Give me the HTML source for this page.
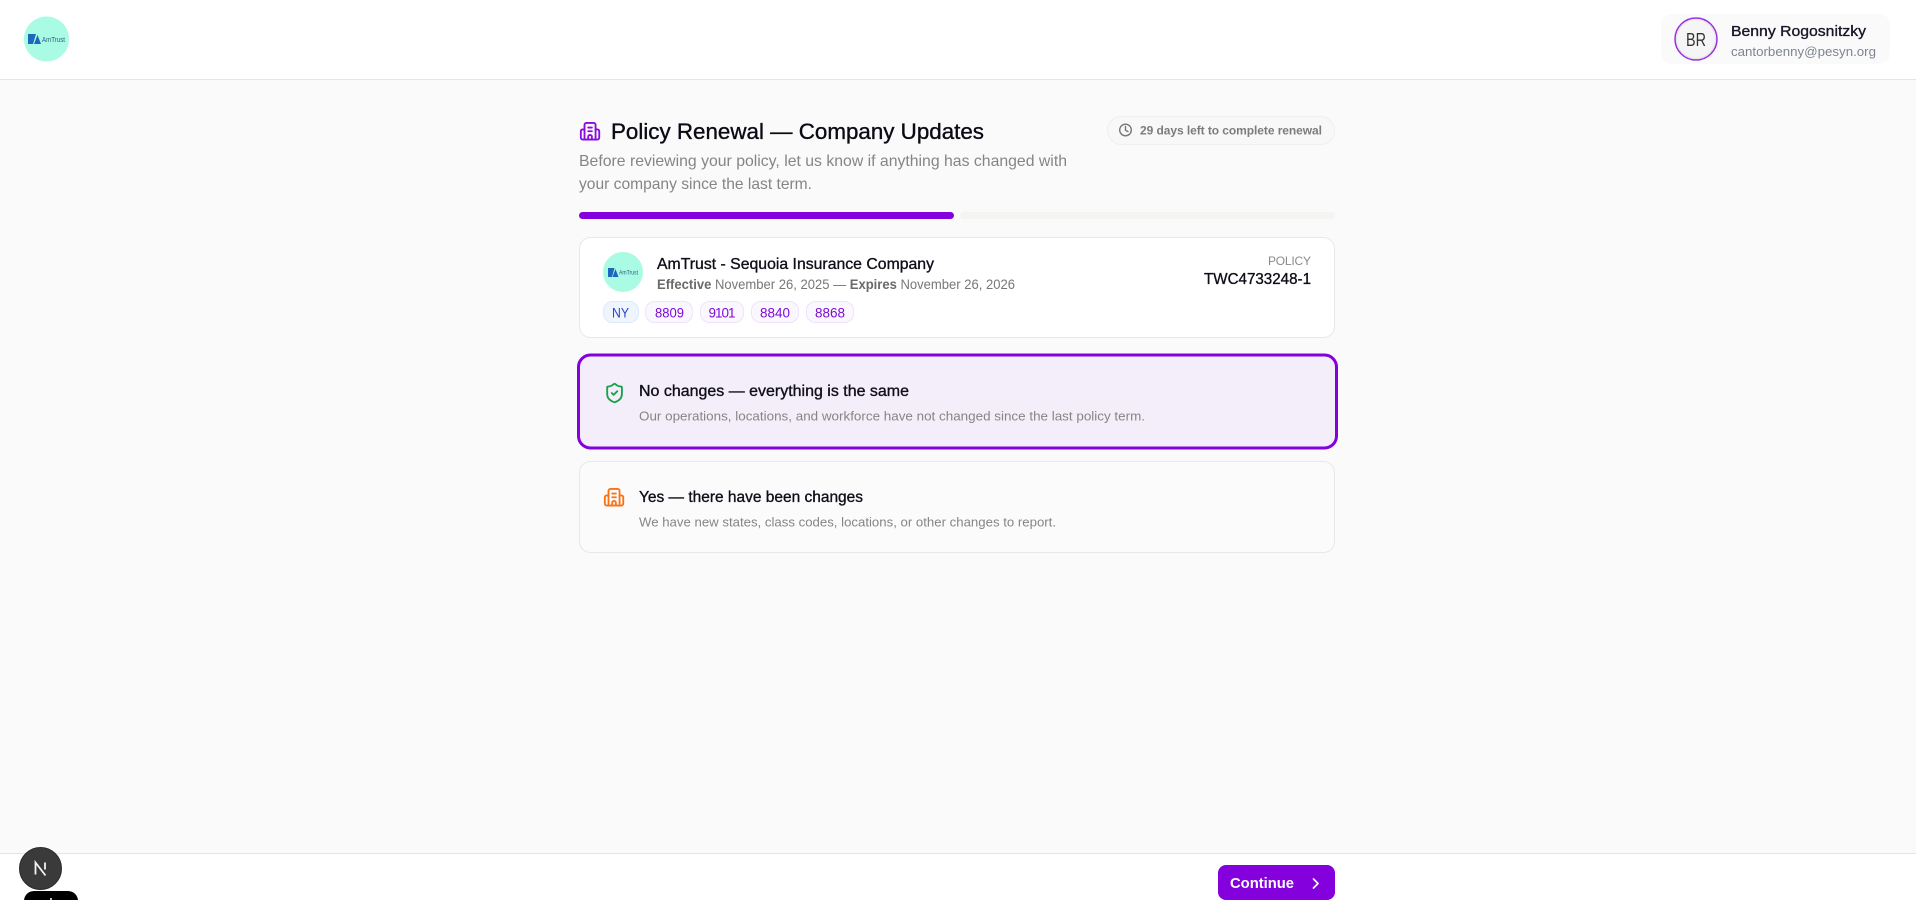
<!DOCTYPE html>
<html lang="en"><head><meta charset="utf-8"><title>Policy Renewal</title>
<style>
html,body{margin:0;padding:0;width:1916px;height:900px;overflow:hidden;background:#fafafa}
svg{display:block;position:absolute;left:0;top:0}
text{font-family:"Liberation Sans",sans-serif;white-space:pre}
.m{stroke:currentColor;stroke-width:.35}
.i{fill:none;stroke-width:2;stroke-linecap:round;stroke-linejoin:round}
</style></head><body>
<svg width="1916" height="900" viewBox="0 0 1916 900" xmlns="http://www.w3.org/2000/svg">
<rect width="1916" height="900" fill="#fafafa"/>
<!-- header -->
<rect width="1916" height="79" fill="#fff"/>
<rect y="79" width="1916" height="1" fill="#e5e5e5"/>
<circle cx="46.500" cy="39" r="22.500" fill="#a9fbe3"/>
<path d="M28 34h8l-3 10h-5z" fill="#1c68bd"/><path d="M37.500 35l3.500 9h-7z" fill="#1c68bd"/>
<text x="42" y="42" font-size="7" fill="#2b5d7d" textLength="23" lengthAdjust="spacingAndGlyphs">AmTrust</text>
<rect x="1661" y="14" width="229" height="50" rx="11" fill="#fafafa"/>
<circle cx="1696" cy="39" r="21" fill="#f5f5f5" stroke="#9b30e0" stroke-width="1.500"/>
<circle cx="1696" cy="39" r="19.500" fill="none" stroke="#e5e5e5" stroke-width="1"/>
<text x="1686" y="46" font-size="18" fill="#333" textLength="20" lengthAdjust="spacingAndGlyphs">BR</text>
<text x="1731" y="36" font-size="15" fill="#171727" class="m" style="color:#171727" textLength="135" lengthAdjust="spacingAndGlyphs">Benny Rogosnitzky</text>
<text x="1731" y="56" font-size="13" fill="#7d8590" textLength="145" lengthAdjust="spacingAndGlyphs">cantorbenny@pesyn.org</text>
<!-- title -->
<g class="i" stroke="#8a0adf" transform="translate(579 120.200) scale(.92)">
<path d="M6 21V5a2 2 0 0 1 2-2h8a2 2 0 0 1 2 2v16"/><path d="M6 10H4a2 2 0 0 0-2 2v7a2 2 0 0 0 2 2h16a2 2 0 0 0 2-2v-7a2 2 0 0 0-2-2h-2"/><path d="M10 8h4M10 12h4"/><path d="M14 21v-3a2 2 0 0 0-4 0v3"/>
</g>
<text x="611" y="139" font-size="22" fill="#0a0a14" class="m" style="color:#0a0a14" textLength="373" lengthAdjust="spacingAndGlyphs">Policy Renewal — Company Updates</text>
<text x="579" y="166" font-size="16" fill="#858585" textLength="488" lengthAdjust="spacingAndGlyphs">Before reviewing your policy, let us know if anything has changed with</text>
<text x="579" y="189" font-size="16" fill="#858585" textLength="233" lengthAdjust="spacingAndGlyphs">your company since the last term.</text>
<!-- badge -->
<rect x="1107.500" y="116.500" width="227" height="28" rx="14" fill="#f8f8f9" stroke="#efefef"/>
<g class="i" stroke="#777" style="stroke-width:1.400"><circle cx="1125.500" cy="130" r="5.800"/><path d="M1125.500 126.500v3.800l2.400 1.200"/></g>
<text x="1140" y="134.500" font-size="12" font-weight="700" fill="#7c7c7c" textLength="182" lengthAdjust="spacing">29 days left to complete renewal</text>
<!-- progress -->
<rect x="579" y="212" width="375" height="7" rx="3.500" fill="#8400dc"/>
<rect x="960" y="212" width="375" height="7" rx="3.500" fill="#f4f4f2"/>
<!-- policy card -->
<rect x="579.500" y="237.500" width="755" height="100" rx="11" fill="#fff" stroke="#e8e8e8"/>
<circle cx="623" cy="272" r="20" fill="#a9fbe3"/>
<path d="M608 268h6.500l-2.500 9h-4z" fill="#1c68bd"/><path d="M615.500 269l3 8h-6z" fill="#1c68bd"/>
<text x="619" y="274.500" font-size="6" fill="#2b5d7d" textLength="19" lengthAdjust="spacingAndGlyphs">AmTrust</text>
<text x="657" y="269" font-size="16" fill="#0f0f1a" class="m" style="color:#0f0f1a" textLength="277" lengthAdjust="spacingAndGlyphs">AmTrust - Sequoia Insurance Company</text>
<text x="657" y="289" font-size="14" fill="#777" textLength="358" lengthAdjust="spacingAndGlyphs"><tspan font-weight="700" fill="#6a6a6a">Effective</tspan> November 26, 2025 — <tspan font-weight="700" fill="#6a6a6a">Expires</tspan> November 26, 2026</text>
<rect x="603.500" y="301.500" width="35" height="21" rx="9" fill="#eef5fe" stroke="#dde9fb"/>
<text x="612" y="317.500" font-size="14" fill="#2b45c9" textLength="17" lengthAdjust="spacingAndGlyphs">NY</text>
<rect x="645.500" y="301.500" width="47" height="21" rx="9" fill="#fbf7fe" stroke="#eee3f9"/>
<text x="655" y="317.500" font-size="13.500" fill="#7d0bd8" textLength="29" lengthAdjust="spacingAndGlyphs">8809</text>
<rect x="700.500" y="301.500" width="43" height="21" rx="9" fill="#fbf7fe" stroke="#eee3f9"/>
<text x="708.500" y="317.500" font-size="13.500" fill="#7d0bd8" textLength="27" lengthAdjust="spacing">9101</text>
<rect x="751.500" y="301.500" width="47" height="21" rx="9" fill="#fbf7fe" stroke="#eee3f9"/>
<text x="760" y="317.500" font-size="13.500" fill="#7d0bd8" textLength="30" lengthAdjust="spacingAndGlyphs">8840</text>
<rect x="806.500" y="301.500" width="47" height="21" rx="9" fill="#fbf7fe" stroke="#eee3f9"/>
<text x="815" y="317.500" font-size="13.500" fill="#7d0bd8" textLength="30" lengthAdjust="spacingAndGlyphs">8868</text>
<text x="1268" y="265" font-size="12" fill="#8a8a8a" textLength="43" lengthAdjust="spacing">POLICY</text>
<text x="1204" y="284" font-size="15.500" fill="#0f0f1a" class="m" style="color:#0f0f1a" textLength="107" lengthAdjust="spacingAndGlyphs">TWC4733248-1</text>
<!-- option 1 -->
<rect x="578.500" y="355" width="758" height="93" rx="12" fill="#f4eefa" stroke="#8400dc" stroke-width="3"/>
<g class="i" stroke="#16a34a" transform="translate(603.500 382) scale(.92)">
<path d="M20 13c0 5-3.500 7.500-7.660 8.950a1 1 0 0 1-.67-.01C7.500 20.500 4 18 4 13V6a1 1 0 0 1 1-1c2 0 4.500-1.200 6.240-2.720a1.170 1.170 0 0 1 1.520 0C14.510 3.810 17 5 19 5a1 1 0 0 1 1 1z"/><path d="m9 12 2 2 4-4"/>
</g>
<text x="639" y="396" font-size="15.500" fill="#0f0f1a" class="m" style="color:#0f0f1a" textLength="270" lengthAdjust="spacingAndGlyphs">No changes — everything is the same</text>
<text x="639" y="420.500" font-size="13" fill="#858585" textLength="506" lengthAdjust="spacingAndGlyphs">Our operations, locations, and workforce have not changed since the last policy term.</text>
<!-- option 2 -->
<rect x="579.500" y="461.500" width="755" height="91" rx="11" fill="#fbfbfb" stroke="#e8e8e8"/>
<g class="i" stroke="#f97316" transform="translate(603 486.200) scale(.92)">
<path d="M6 21V5a2 2 0 0 1 2-2h8a2 2 0 0 1 2 2v16"/><path d="M6 10H4a2 2 0 0 0-2 2v7a2 2 0 0 0 2 2h16a2 2 0 0 0 2-2v-7a2 2 0 0 0-2-2h-2"/><path d="M10 8h4M10 12h4"/><path d="M14 21v-3a2 2 0 0 0-4 0v3"/>
</g>
<text x="639" y="502" font-size="15.500" fill="#0f0f1a" class="m" style="color:#0f0f1a" textLength="224" lengthAdjust="spacingAndGlyphs">Yes — there have been changes</text>
<text x="639" y="526.500" font-size="13" fill="#858585" textLength="417" lengthAdjust="spacingAndGlyphs">We have new states, class codes, locations, or other changes to report.</text>
<!-- footer -->
<rect y="853" width="1916" height="47" fill="#fff"/>
<rect y="853" width="1916" height="1" fill="#e5e5e5"/>
<rect x="1218" y="865" width="117" height="35" rx="8" fill="#8400dc"/>
<text x="1230" y="888" font-size="15" font-weight="700" fill="#fff" textLength="64" lengthAdjust="spacingAndGlyphs">Continue</text>
<path d="M1313.500 879l4.500 4.500-4.500 4.500" fill="none" stroke="#fff" stroke-width="1.700" stroke-linecap="round" stroke-linejoin="round"/>
<!-- dev badge -->
<rect x="24" y="891" width="54" height="24" rx="10" fill="#000"/>
<circle cx="51" cy="899" r="1" fill="#fff"/>
<circle cx="40.500" cy="868.500" r="21" fill="#3a3a3a" stroke="#2a2a2a" stroke-width="1"/>
<path d="M35.500 874.500v-12l10 13M45 862.500v7" fill="none" stroke="#f2f2f2" stroke-width="1.800"/>
</svg>
</body></html>
